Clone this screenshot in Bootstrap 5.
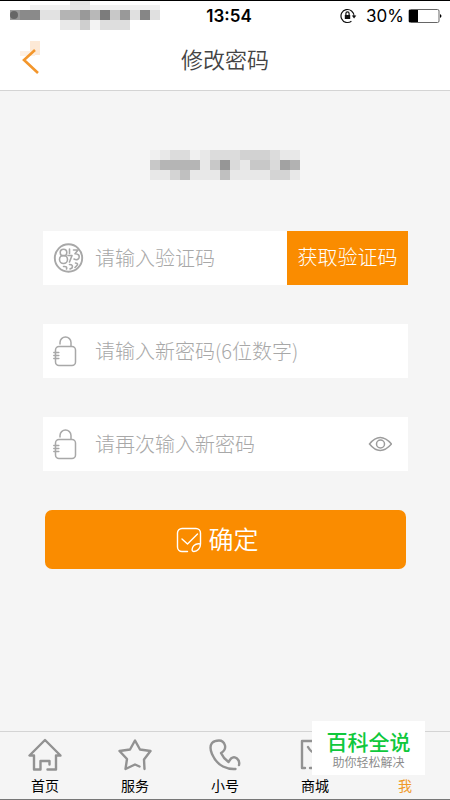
<!DOCTYPE html>
<html lang="zh-CN">
<head>
<meta charset="utf-8">
<meta name="viewport" content="width=device-width, initial-scale=1">
<title>修改密码</title>
<link href="https://cdn.jsdelivr.net/npm/bootstrap@5.3.0/dist/css/bootstrap.min.css" rel="stylesheet">
<style>
  :root { --brand: #fa8c00; --line: #d4d4d4; }
  body { background: #f5f5f5; font-family: "Liberation Sans", "Noto Sans CJK SC", sans-serif; color: #000; border-top: 1px solid #000; border-bottom: 1px solid #777; }
  svg { display: block; flex: none; fill: none; }
  .status { height: 30px; font-family: Inter, "Liberation Sans", sans-serif; font-size: 17px; line-height: 30px; }
  .status-side { flex: 1 1 0; }
  .clock { font-weight: 600; }
  .title-bar { height: 60px; border-bottom: 1px solid var(--line); }
  .title-text { font-size: 22px; line-height: 32px; font-weight: 350; color: #444; }
  .side-slot { width: 48px; }
  .account { padding-top: 59px; padding-bottom: 51px; }
  .form-area { padding: 0 42px 0 43px; }
  .field { height: 54px; background: #fff; margin-bottom: 39px; }
  .icon-slot { width: 52px; padding-left: 10px; flex: none; }
  .field input { font-family: "Noto Sans CJK SC", sans-serif; font-size: 20px; font-weight: 300; line-height: 30px; min-width: 0; padding: 0; }
  .field input::placeholder { color: #a8a8a8; opacity: 1; }
  .code-btn { width: 121px; background: var(--brand); color: #fff; font-size: 20px; font-weight: 300; flex: none; }
  .submit-row { padding: 0 2px; }
  .submit-btn { height: 59px; background: var(--brand); color: #fff; font-size: 25px; line-height: 36px; font-weight: 350; border-radius: 7px; gap: 6px; }
  .tabs { height: 68px; border-top: 1px solid var(--line); }
  .tab { color: #000; font-size: 14px; line-height: 20px; padding-top: 6px; gap: 4px; }
  .tab svg { stroke: #929292; stroke-width: 2.4; stroke-linejoin: round; stroke-linecap: round; }
  .tab.active { color: #f09a2a; }
  .site-tag { position: absolute; right: 25px; bottom: 24px; width: 113px; height: 54px; background: #fff; padding-top: 9px; }
  .tag-name { font-size: 21px; line-height: 26px; font-weight: 500; color: #0fc83c; }
  .tag-line { font-size: 12px; line-height: 14px; color: #8c8c8c; }
</style>
<script src="https://cdn.jsdelivr.net/npm/bootstrap@5.3.0/dist/js/bootstrap.bundle.min.js"></script>
</head>
<body class="d-flex flex-column min-vh-100 position-relative">
<header class="bg-white">
  <div class="status d-flex">
    <div class="status-side pe-3">
      <svg width="170" height="30" viewBox="0 1 170 30" shape-rendering="crispEdges" aria-hidden="true">
        <path fill="#f1f1f1" d="M30 5h130v5H30z"/><path fill="#e4e4e4" d="M70 1h20v9H70z"/>
        <path fill="#999" d="M10 10h10v10H10z"/><path fill="#8a8a8a" d="M20 10h20v10H20z"/>
        <path fill="#e2e2e2" d="M40 10h20v10H40z"/><path fill="#b4b4b4" d="M60 10h20v10H60z"/>
        <path fill="#999" d="M80 10h10v10H80zM120 10h10v10h-10z"/><path fill="#b8b8b8" d="M90 10h10v10H90z"/>
        <path fill="#7c7c7c" d="M100 10h10v10h-10z"/><path fill="#c8c8c8" d="M110 10h10v10h-10z"/>
        <path fill="#e0e0e0" d="M130 10h10v10h-10zM150 10h10v10h-10z"/><path fill="#868686" d="M140 10h10v10h-10z"/>
        <path fill="#e9e9e9" d="M60 20h20v10H60z"/><path fill="#cfcfcf" d="M80 20h10v10H80z"/>
        <path fill="#f3f3f3" d="M90 20h10v10H90z"/><path fill="#dedede" d="M100 20h30v10h-30z"/>
        <circle cx="14" cy="15" r="4" fill="#666" shape-rendering="auto"/>
      </svg>
    </div>
    <div class="clock">13:54</div>
    <div class="status-side d-flex justify-content-end align-items-center pe-2">
      <svg class="me-2" width="18" height="16" viewBox="0 0 18 16" aria-hidden="true">
        <path d="M14 8a6.5 6.5 0 1 0-2.6 5.2" stroke="#111" stroke-width="1.2"/><path d="M11.800 7.500h4.500l-2.200 3z" fill="#111"/>
        <path d="M4.800 7h5.400v4H4.800z" fill="#111"/><path d="M5.900 7V5.500a1.600 1.600 0 0 1 3.200 0V7" stroke="#111" stroke-width="1.2"/>
      </svg>
      <span>30%</span>
      <svg class="ms-1" width="34" height="14" viewBox="0 0 34 14" aria-hidden="true">
        <rect x="1" y=".5" width="30" height="13" rx="1.5" stroke="#666"/><path d="M1 1h9v12H1z" fill="#000"/><path d="M32 5q3 2 0 4z" fill="#000"/>
      </svg>
    </div>
  </div>
  <div class="title-bar d-flex align-items-center justify-content-between">
    <button type="button" class="side-slot btn p-0 border-0" aria-label="返回">
      <svg width="48" height="40" viewBox="0 0 48 40">
        <path d="M30 0h10v14H30z" fill="#fde9d6"/><path d="M20 10h15v5H20z" fill="#fdf0e4"/>
        <path d="M35 9 24 19l14 13" stroke="#f3962b" stroke-width="2.600"/>
      </svg>
    </button>
    <h1 class="title-text m-0">修改密码</h1>
    <span class="side-slot"></span>
  </div>
</header>
<main class="flex-grow-1">
  <div class="account d-flex justify-content-center">
    <svg width="150" height="30" viewBox="0 0 150 30" shape-rendering="crispEdges" role="img" aria-label="账号已隐藏">
      <path fill="#e8e8e8" d="M0 0h150v30H0z"/><path fill="#f0f0f0" d="M0 0h10v10H0zM40 0h10v10H40z"/>
      <path fill="#dcdcdc" d="M20 0h20v10H20zM60 0h30v10H60zM120 0h10v10h-10z"/><path fill="#d2d2d2" d="M90 0h30v10H90z"/>
      <path fill="#c8c8c8" d="M0 10h10v10H0zM60 10h10v10H60zM100 10h20v10h-20z"/><path fill="#b5b5b5" d="M10 10h40v10H10z"/>
      <path fill="#969696" d="M70 10h10v10H70z"/><path fill="#dadada" d="M80 10h10v10H80zM120 10h10v10h-10z"/>
      <path fill="#a2a2a2" d="M130 10h10v10h-10z"/><path fill="#b2b2b2" d="M140 10h10v10h-10z"/>
      <path fill="#d4d4d4" d="M20 20h10v10H20zM120 20h20v10h-20z"/><path fill="#c0c0c0" d="M30 20h10v10H30zM70 20h10v10H70z"/>
    </svg>
  </div>
  <form class="form-area">
    <div class="field d-flex align-items-center">
      <label class="icon-slot" for="code" aria-label="验证码">
        <svg width="32" height="32" viewBox="0 0 32 32" stroke="#a8a8a8" stroke-width="1.600" stroke-linecap="round" stroke-linejoin="round">
          <circle cx="15.500" cy="16" r="13.700" stroke-width="1.900"/>
          <circle cx="10.500" cy="10.500" r="3.300"/><circle cx="10.500" cy="17.500" r="4"/>
          <path d="M16.500 7v4.500M20.500 8h4.500l-3 3.800q5 .2 4 4-1.500 3-5 1.200M15 13.500h4l-2.500 6.500M10.500 24.500q4-.5 3 2.500M16.500 22.500q4 0 2.500 3.500l-2 1M22.500 21q3.500.5 1 3l-1.500 1.500"/>
        </svg>
      </label>
      <input id="code" type="text" class="form-control border-0 rounded-0 shadow-none bg-transparent" placeholder="请输入验证码">
      <button type="button" class="code-btn btn border-0 rounded-0 h-100 p-0">获取验证码</button>
    </div>
    <div class="field d-flex align-items-center">
      <label class="icon-slot" for="pwd" aria-label="新密码">
        <svg width="26" height="32" viewBox="0 0 26 32" stroke="#a8a8a8" stroke-width="1.500" stroke-linecap="round">
          <rect x="2.500" y="11.500" width="20" height="19" rx="3.500"/><path d="M7 9V7.500a5.500 5.500 0 0 1 11 0V11M.8 17.500h5M.8 20.500h5M.8 23.500h5"/>
        </svg>
      </label>
      <input id="pwd" type="password" class="form-control border-0 rounded-0 shadow-none bg-transparent" placeholder="请输入新密码(6位数字)">
    </div>
    <div class="field d-flex align-items-center">
      <label class="icon-slot" for="again" aria-label="再次输入新密码">
        <svg width="26" height="32" viewBox="0 0 26 32" stroke="#a8a8a8" stroke-width="1.500" stroke-linecap="round">
          <rect x="2.500" y="11.500" width="20" height="19" rx="3.500"/><path d="M7 9V7.500a5.500 5.500 0 0 1 11 0V11M.8 17.500h5M.8 20.500h5M.8 23.500h5"/>
        </svg>
      </label>
      <input id="again" type="password" class="form-control border-0 rounded-0 shadow-none bg-transparent" placeholder="请再次输入新密码">
      <button type="button" class="btn p-0 border-0 me-3" aria-label="显示密码">
        <svg width="24" height="16" viewBox="0 0 24 16" stroke="#9c9c9c" stroke-width="1.500"><path d="M1.500 8Q12-5 23.500 8 12 21 1.500 8z"/><circle cx="12.500" cy="8" r="4"/></svg>
      </button>
    </div>
    <div class="submit-row">
      <button type="submit" class="submit-btn btn border-0 w-100 py-0 ps-0 pe-3 d-flex align-items-center justify-content-center">
        <svg width="26" height="26" viewBox="0 0 26 26" stroke="#fff" stroke-width="1.400" stroke-linecap="round" stroke-linejoin="round">
          <path d="M11.500 24.500H6a4.500 4.500 0 0 1-4.500-4.500V6A4.500 4.500 0 0 1 6 1.500h14A4.500 4.500 0 0 1 24.500 6v11c0 4-3 7.500-6.500 7.500-3 0-2-4 0-6 1.500-1.500 4-2 6.500-1.500M6 12l5.500 5L21.500 7"/>
        </svg>
        <span>确定</span>
      </button>
    </div>
  </form>
</main>
<nav class="tabs nav nav-justified flex-nowrap" aria-label="主导航">
  <a href="#" class="tab text-decoration-none flex-fill d-flex flex-column align-items-center w-25">
    <svg width="36" height="34" viewBox="0 0 36 34"><path d="M20.500 31.500H29V17.500h4.500L18 2 2.500 17.500H7V31.500h6.500V23h9v3.500"/></svg>首页</a>
  <a href="#" class="tab text-decoration-none flex-fill d-flex flex-column align-items-center w-25">
    <svg width="36" height="34" viewBox="0 0 36 34"><path d="M27.500 31 27 21.500l6.500-8.500-10.500-1.500L18 2.500l-5 9L2.500 13l7.500 8-1.500 10 9.500-4.500 4.500 2"/></svg>服务</a>
  <a href="#" class="tab text-decoration-none flex-fill d-flex flex-column align-items-center w-25">
    <svg width="36" height="34" viewBox="0 0 36 34"><path d="M32 27q1-4-2-6.500-3-2.500-6 0l-2.500 3.500q-5-3.500-7.500-9 5-3 4-7.500-1.500-5-6-5T5 5q-3 4 0 11 4 9 11 12.500 6 3 12.500 2.500"/></svg>小号</a>
  <a href="#" class="tab text-decoration-none flex-fill d-flex flex-column align-items-center w-25">
    <svg width="36" height="34" viewBox="0 0 36 34"><path d="M8 30H5V3h27v27H13M11 9q7 12 15 0"/></svg>商城</a>
  <a href="#" class="tab active text-decoration-none flex-fill d-flex flex-column align-items-center w-25" aria-current="page">
    <svg width="36" height="34" viewBox="0 0 36 34" aria-hidden="true"></svg>我</a>
</nav>
<aside class="site-tag text-center">
  <div class="tag-name">百科全说</div>
  <div class="tag-line">助你轻松解决</div>
</aside>
</body>
</html>
